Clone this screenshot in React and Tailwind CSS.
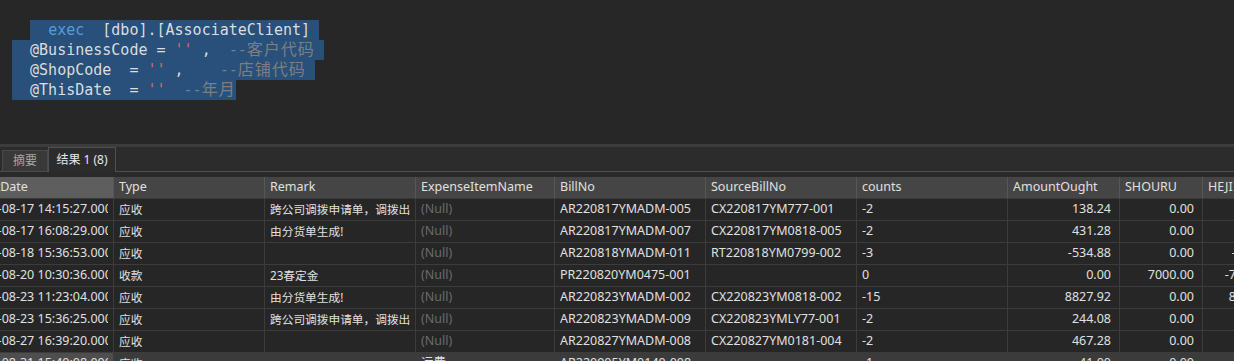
import React from 'react';

const cols = [
  { name: 'AuditDate', w: 'w-[150px]', num: false },
  { name: 'Type', w: 'w-[151px]', num: false, cjk: true },
  { name: 'Remark', w: 'w-[151px]', num: false, cjk: true },
  { name: 'ExpenseItemName', w: 'w-[139px]', num: false },
  { name: 'BillNo', w: 'w-[151px]', num: false },
  { name: 'SourceBillNo', w: 'w-[151px]', num: false },
  { name: 'counts', w: 'w-[151px]', num: false },
  { name: 'AmountOught', w: 'w-[112px]', num: true },
  { name: 'SHOURU', w: 'w-[83px]', num: true },
  { name: 'HEJI', w: 'w-[81px]', num: true },
  { name: 'YEAR', w: 'w-[80px]', num: false },
];

const NULL = null;

const rows = [
  ['2022-08-17 14:15:27.000', '应收', '跨公司调拨申请单，调拨出库', NULL, 'AR220817YMADM-005', 'CX220817YM777-001', '-2', '138.24', '0.00', '138.24', '2022'],
  ['2022-08-17 16:08:29.000', '应收', '由分货单生成!', NULL, 'AR220817YMADM-007', 'CX220817YM0818-005', '-2', '431.28', '0.00', '431.28', '2022'],
  ['2022-08-18 15:36:53.000', '应收', '', NULL, 'AR220818YMADM-011', 'RT220818YM0799-002', '-3', '-534.88', '0.00', '-534.88', '2022'],
  ['2022-08-20 10:30:36.000', '收款', '23春定金', NULL, 'PR220820YM0475-001', '', '0', '0.00', '7000.00', '-7000.00', '2022'],
  ['2022-08-23 11:23:04.000', '应收', '由分货单生成!', NULL, 'AR220823YMADM-002', 'CX220823YM0818-002', '-15', '8827.92', '0.00', '8827.92', '2022'],
  ['2022-08-23 15:36:25.000', '应收', '跨公司调拨申请单，调拨出库', NULL, 'AR220823YMADM-009', 'CX220823YMLY77-001', '-2', '244.08', '0.00', '244.08', '2022'],
  ['2022-08-27 16:39:20.000', '应收', '', NULL, 'AR220827YMADM-008', 'CX220827YM0181-004', '-2', '467.28', '0.00', '467.28', '2022'],
  ['2022-08-31 15:40:08.000', '应收', '', '运费', 'AR220905YM0140-008', '', '-1', '41.00', '0.00', '41.00', '2022'],
];

function Sel({ children }) {
  return <span className="inline-block h-[20px] align-top bg-[#28507a]">{children}</span>;
}

function Editor() {
  const str = 'text-[#d16969]';
  const cmt = 'text-[#7e7e7e]';
  const cjk = 'text-[16px] tracking-[1px]';
  return (
    <div className="h-[144px] bg-[#272727] pt-[20px] pl-[12px] font-['DejaVu_Sans_Mono','Noto_Sans_CJK_SC',monospace] text-[15px] text-[#dcdcdc] whitespace-pre">
      <div className="h-[20px] leading-[20px]">
        {'  '}<Sel>{'  '}<span className="text-[#569cd6]">exec</span>{'  [dbo].[AssociateClient] '}</Sel>
      </div>
      <div className="h-[20px] leading-[20px]">
        <Sel>{'  @BusinessCode = '}<span className={str}>''</span>{' ,  '}<span className={cmt}>--<span className={cjk}>客户代码</span></span>{' '}</Sel>
      </div>
      <div className="h-[20px] leading-[20px]">
        <Sel>{'  @ShopCode  = '}<span className={str}>''</span>{' ,    '}<span className={cmt}>--<span className={cjk}>店铺代码</span></span>{' '}</Sel>
      </div>
      <div className="h-[20px] leading-[20px]">
        <Sel>{'  @ThisDate  = '}<span className={str}>''</span>{'  '}<span className={cmt}>--<span className={cjk}>年月</span></span></Sel>
      </div>
    </div>
  );
}

function Tabs() {
  return (
    <div>
      <div className="h-[3px] bg-[#3c3c3c]" />
      <div className="h-[25px] bg-[#2c2c2c] flex items-end text-[12px] font-['Noto_Sans','Noto_Sans_CJK_SC',sans-serif]">
        <div className="w-[2px] h-full border-b border-[#4d4d4d]" />
        <div className="h-[22px] w-[46px] bg-[#393939] border border-[#4a4a4a] flex items-center justify-center text-[#a5a5a5]">摘要</div>
        <div className="h-[25px] w-[68px] border border-b-0 border-[#505050] flex items-center justify-center text-[#e6e6e6]">结果 1 (8)</div>
        <div className="flex-1 h-full border-b border-[#505050]" />
      </div>
      <div className="h-[5px] bg-[#2a2a2a]" />
    </div>
  );
}

function Cell({ col, value, first, header, last }) {
  const isNull = value === null;
  const bg = header
    ? first ? 'bg-[#5e5e5e]' : ''
    : last && first ? 'bg-[#4e4e4e]' : '';
  return (
    <div className={`${col.w} ${bg} shrink-0 h-full border-r ${header ? 'border-[#575757]' : 'border-[#3c3c3c]'} flex items-center pl-[5px] ${col.num && !header ? 'pr-[8px]' : 'pr-[5px]'}`}>
      <div className={`w-full overflow-hidden whitespace-nowrap ${col.num && !header ? 'text-right' : ''} ${col.cjk && !header ? 'text-[11.7px]' : ''} ${isNull ? 'text-[#6b6b6b]' : ''}`}>
        {isNull ? '(Null)' : value}
      </div>
    </div>
  );
}

function Grid() {
  return (
    <div className="overflow-hidden bg-[#262626] font-['Noto_Sans','Noto_Sans_CJK_SC',sans-serif] text-[12.5px] text-[#e0e0e0]">
      <div className="ml-[-36px] w-max">
        <div className="h-[22px] flex bg-[#454545] border-b border-[#3a3a3a] text-[#e0e0e0]">
          {cols.map((c, i) => <Cell key={c.name} col={c} value={c.name} first={i === 0} header />)}
        </div>
        {rows.map((r, ri) => {
          const last = ri === rows.length - 1;
          return (
            <div key={ri} className={`h-[22px] flex border-b border-[#3c3c3c] ${last ? 'bg-[#3b3b3b]' : ''}`}>
              {cols.map((c, i) => <Cell key={c.name} col={c} value={r[i]} first={i === 0} last={last} />)}
            </div>
          );
        })}
      </div>
    </div>
  );
}

export default function App() {
  return (
    <div className="w-[1234px] h-[361px] overflow-hidden bg-[#272727]">
      <Editor />
      <Tabs />
      <Grid />
    </div>
  );
}
